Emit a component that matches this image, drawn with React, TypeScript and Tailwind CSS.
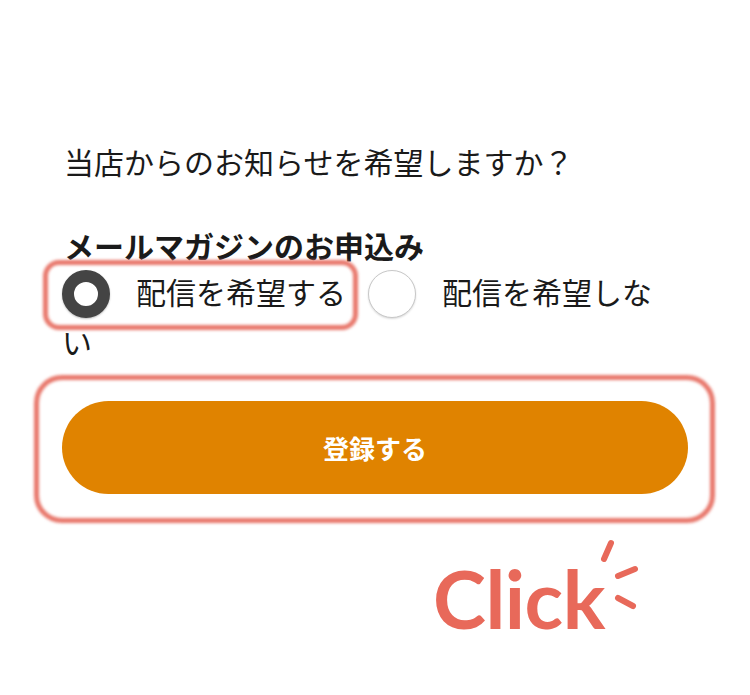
import React from "react";

export default function App() {
  return (
    <div
      className="w-[750px] h-[695px] bg-white overflow-hidden text-[#1a1a1a]"
      style={{ fontFamily: '"Noto Sans CJK JP", "Noto Sans", sans-serif' }}
    >
      <div className="px-[62px] pt-[138px]">
        <p className="text-[30px] leading-[46px] pl-[2px]">当店からのお知らせを希望しますか？</p>
        <p className="mt-[38px] text-[30px] leading-[46px] font-bold pl-[2px]">メールマガジンのお申込み</p>
        <div className="text-[30px] leading-[46px] pr-[20px]">
          <span className="relative inline-block">
            <span className="inline-block align-middle w-[48px] h-[48px] rounded-full border-[12px] border-[#444] bg-white shadow-[0_1px_2px_rgba(0,0,0,0.25)] mr-[26px] -mt-[4px]" />
            配信を希望する
            <span className="absolute left-[-19px] right-[-12px] top-[-8px] bottom-[-12px] rounded-[16px] border-[5px] border-[#e8776b] blur-[1.5px]" />
          </span>
          <span className="inline-block align-middle w-[48px] h-[48px] rounded-full border-[1.5px] border-[#c8c8c8] bg-white shadow-[0_1px_2px_rgba(0,0,0,0.15)] ml-[22px] mr-[26px] -mt-[4px]" />
          配信を希望しない
        </div>
        <div className="relative mt-[37px]">
          <button className="w-full h-[93px] rounded-full bg-[#e08300] text-white text-[26px] font-bold flex items-center justify-center">
            登録する
          </button>
          <div className="absolute left-[-28px] right-[-27px] top-[-26px] bottom-[-29px] rounded-[28px] border-[5px] border-[#e8776b] blur-[1.5px]" />
        </div>
      </div>
      <div className="flex items-start pl-[433px] mt-[64px]">
        <span
          className="text-[80px] leading-[80px] font-bold text-[#e8695a] tracking-[-0.5px]"
          style={{ fontFamily: 'Lato, "Open Sans", sans-serif' }}
        >
          Click
        </span>
        <svg width="40" height="72" viewBox="0 0 40 72" className="-ml-[6px] -mt-[20px]">
          <g stroke="#e8695a" strokeWidth="6" strokeLinecap="round" fill="none">
            <line x1="12" y1="5" x2="5" y2="21" />
            <line x1="19" y1="38" x2="36" y2="31" />
            <line x1="19" y1="60" x2="34" y2="68" />
          </g>
        </svg>
      </div>
    </div>
  );
}
